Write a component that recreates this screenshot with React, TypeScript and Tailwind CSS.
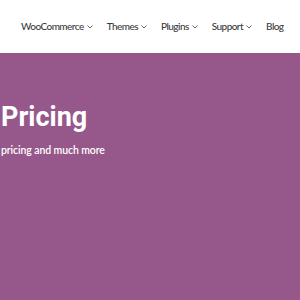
import React from 'react';

const navItems = [
  { label: 'WooCommerce', menu: true },
  { label: 'Themes', menu: true },
  { label: 'Plugins', menu: true },
  { label: 'Support', menu: true },
  { label: 'Blog', menu: false },
];

function Chevron() {
  return (
    <svg width="6" height="4" viewBox="0 0 6 4" className="ml-[3px] mt-[1px]">
      <path d="M0.5 0.5 L3 3 L5.5 0.5" fill="none" stroke="#666" strokeWidth="1" />
    </svg>
  );
}

export default function App() {
  return (
    <div className="w-[300px] h-[300px] overflow-hidden bg-[#96588a] font-['Lato',sans-serif]">
      {/* top nav */}
      <header className="h-[53px] bg-white flex items-center pl-[21px] gap-[14px] whitespace-nowrap">
        {navItems.map(item => (
          <a key={item.label} className="flex items-center text-[10px] tracking-[-0.55px] text-[#3c3c3c] font-medium">
            {item.label}
            {item.menu && <Chevron />}
          </a>
        ))}
      </header>

      {/* hero */}
      <section className="pt-[48px] pl-[1px] text-white">
        <h1 className="text-[27px] leading-[32px] font-bold font-['Roboto',sans-serif]">Pricing</h1>
        <p className="mt-[10px] text-[10.5px] font-semibold tracking-[-0.1px]">pricing and much more</p>
      </section>
    </div>
  );
}
